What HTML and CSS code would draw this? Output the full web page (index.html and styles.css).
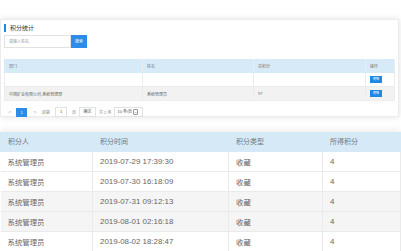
FILE: index.html
```html
<!DOCTYPE html>
<html lang="zh">

<head>
    <meta charset="UTF-8">
    <title>积分统计</title>
    <link rel="stylesheet" href="styles.css">
</head>

<body>

    <div class="top-wrap">
        <div class="panel">
            <div class="panel-title">积分统计</div>
            <div class="search-bar">
                <div class="search-input">请输入姓名</div>
                <div class="search-btn">搜索</div>
            </div>
            <table class="mini-table">
                <thead>
                    <tr>
                        <th class="c-dept">部门</th>
                        <th class="c-name">姓名</th>
                        <th class="c-total">总积分</th>
                        <th class="c-op">操作</th>
                    </tr>
                </thead>
                <tbody>
                    <tr>
                        <td></td>
                        <td></td>
                        <td></td>
                        <td><span class="mini-btn">明细</span></td>
                    </tr>
                    <tr class="gray">
                        <td>中国矿业有限公司-系统管理部</td>
                        <td>系统管理员</td>
                        <td>97</td>
                        <td><span class="mini-btn">明细</span></td>
                    </tr>
                </tbody>
            </table>
            <div class="pager">
                <span class="arrow">&lt;</span>
                <span class="page-cur">1</span>
                <span class="arrow">&gt;</span>
                <span class="pg-text">到第</span>
                <span class="pg-input">1</span>
                <span class="pg-text">页</span>
                <span class="pg-ok">确定</span>
                <span class="pg-text">共 2 条</span>
                <span class="pg-select">10 条/页<span class="caret">&#8964;</span></span>
            </div>
        </div>
    </div>

    <table class="big-table">
        <thead>
            <tr>
                <th class="b1">积分人</th>
                <th class="b2">积分时间</th>
                <th class="b3">积分类型</th>
                <th class="b4">所得积分</th>
            </tr>
        </thead>
        <tbody>
            <tr>
                <td>系统管理员</td>
                <td>2019-07-29 17:39:30</td>
                <td>收藏</td>
                <td>4</td>
            </tr>
            <tr>
                <td>系统管理员</td>
                <td>2019-07-30 16:18:09</td>
                <td>收藏</td>
                <td>4</td>
            </tr>
            <tr class="gray">
                <td>系统管理员</td>
                <td>2019-07-31 09:12:13</td>
                <td>收藏</td>
                <td>4</td>
            </tr>
            <tr class="gray">
                <td>系统管理员</td>
                <td>2019-08-01 02:16:18</td>
                <td>收藏</td>
                <td>4</td>
            </tr>
            <tr>
                <td>系统管理员</td>
                <td>2019-08-02 18:28:47</td>
                <td>收藏</td>
                <td>4</td>
            </tr>
        </tbody>
    </table>

</body>

</html>
```

FILE: styles.css
```css
body {
    margin: 0;
    width: 401px;
    height: 251px;
    overflow: hidden;
    background: #fff;
    font-family: "Liberation Sans", "Noto Sans CJK SC", sans-serif;
    color: #666;
}

.top-wrap {
    padding: 19px 2px 0 0;
}

.panel {
    height: 98px;
    box-sizing: border-box;
    border: 1px solid #ececec;
    box-shadow: 0 0 6px rgba(0, 0, 0, 0.12);
    padding: 3px 3px 0 3px;
}

.panel-title {
    margin-top: 1px;
    height: 8px;
    line-height: 8px;
    border-left: 2px solid #1e88e5;
    padding-left: 4px;
    font-size: 6px;
    color: #333;
}

.search-bar {
    display: flex;
    margin-top: 3px;
    height: 13px;
}

.search-input {
    width: 67px;
    box-sizing: border-box;
    border: 1px solid #e2e2e2;
    font-size: 4px;
    line-height: 11px;
    padding-left: 4px;
    color: #999;
}

.search-btn {
    width: 16px;
    background: #2d8ce8;
    color: #fff;
    font-size: 4px;
    line-height: 13px;
    text-align: center;
}

.mini-table {
    margin-top: 11px;
    width: 391px;
    border-collapse: collapse;
    font-size: 4px;
    color: #666;
}

.mini-table th,
.mini-table td {
    height: 13px;
    padding: 0 0 0 4px;
    text-align: left;
    font-weight: normal;
    border: 1px solid #ececec;
    border-top: none;
}

.mini-table th {
    background: #d7eaf8;
    border-color: #d7eaf8 #ececec;
    border-left-color: #d7eaf8;
    color: #777;
}

.mini-table tr.gray td {
    background: #f2f2f2;
}

.c-dept {
    width: 133px;
}

.c-name {
    width: 106px;
}

.c-total {
    width: 107px;
}

.mini-btn {
    display: inline-block;
    width: 12px;
    height: 7px;
    background: #1e88e5;
    color: #fff;
    font-size: 3px;
    line-height: 7px;
    text-align: center;
    vertical-align: middle;
}

.pager {
    display: flex;
    align-items: center;
    margin-top: 6px;
    height: 10px;
    font-size: 4px;
    color: #888;
}

.arrow {
    width: 8px;
    margin-left: 2px;
    text-align: center;
    font-size: 6px;
    color: #bbb;
}

.page-cur {
    width: 11px;
    height: 9px;
    line-height: 9px;
    background: #2d8ce8;
    color: #fff;
    text-align: center;
    margin: 0 2px;
}

.pg-text {
    margin: 0 3px;
}

.pg-input,
.pg-ok,
.pg-select {
    height: 8px;
    line-height: 8px;
    border: 1px solid #e2e2e2;
    text-align: center;
    color: #555;
}

.pg-input {
    width: 10px;
    margin: 0 2px;
}

.pg-ok {
    width: 15px;
}

.pg-select {
    display: flex;
    align-items: center;
    padding: 0 0 0 2px;
    width: 25px;
}

.caret {
    margin-left: 1px;
    border: 1px solid #999;
    border-radius: 1px;
    height: 4px;
    line-height: 3px;
    font-size: 4px;
    color: #666;
}

.big-table {
    margin-top: 15px;
    width: 401px;
    border-collapse: collapse;
    font-size: 7.4px;
    color: #666;
    box-shadow: 0 -3px 6px rgba(0, 0, 0, 0.06);
}

.big-table th,
.big-table td {
    height: 20px;
    padding: 0 0 0 7px;
    text-align: left;
    font-weight: normal;
    border: 1px solid #eaeaea;
    border-top: none;
    box-sizing: border-box;
}

.big-table th {
    height: 19px;
    background: #d6e9f7;
    border-color: #d6e9f7;
    color: #777;
    font-size: 7px;
}

.big-table .num {
    font-size: 7.9px;
}

.big-table tr td:first-child {
    border-left: none;
}

.big-table tr td:nth-child(2),
.big-table tr td:nth-child(4) {
    font-size: 7.9px;
}

.big-table tr.gray td {
    background: #f5f5f5;
}

.b1 {
    width: 92px;
}

.b2 {
    width: 136px;
}

.b3 {
    width: 94px;
}
```
